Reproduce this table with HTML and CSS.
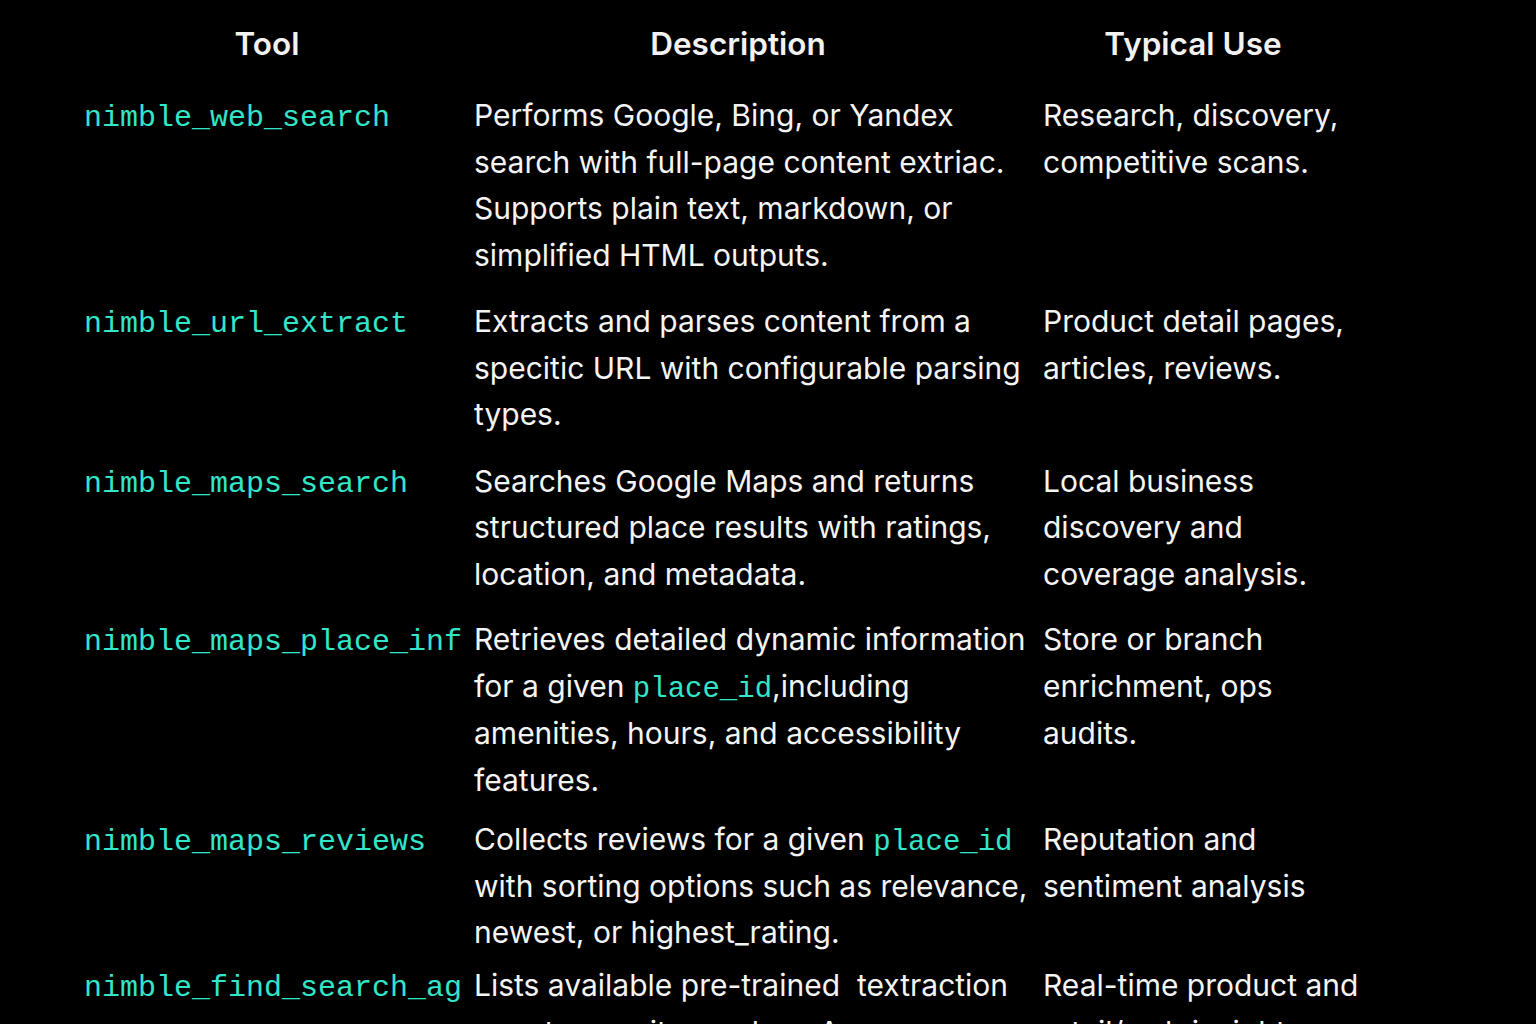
FILE: index.html
```html
<!DOCTYPE html>
<html lang="en">
<head>
<meta charset="utf-8">
<title>Nimble tools</title>
<link rel="stylesheet" href="styles.css">
</head>
<body>
<main class="page">
  <div class="tbl-head">
    <div class="th th--tool">Tool</div>
    <div class="th th--desc">Description</div>
    <div class="th th--use">Typical Use</div>
  </div>

  <div class="row">
    <div class="cell cell--tool"><code class="code">nimble_web_search</code></div>
    <div class="cell cell--desc">Performs Google, Bing, or Yandex<br>search with full-page content extriac.<br>Supports plain text, markdown, or<br>simplified HTML outputs.</div>
    <div class="cell cell--use">Research, discovery,<br>competitive scans.</div>
  </div>

  <div class="row">
    <div class="cell cell--tool"><code class="code">nimble_url_extract</code></div>
    <div class="cell cell--desc">Extracts and parses content from a<br>specitic URL with configurable parsing<br>types.</div>
    <div class="cell cell--use">Product detail pages,<br>articles, reviews.</div>
  </div>

  <div class="row row--r3">
    <div class="cell cell--tool"><code class="code">nimble_maps_search</code></div>
    <div class="cell cell--desc">Searches Google Maps and returns<br>structured place results with ratings,<br>location, and metadata.</div>
    <div class="cell cell--use">Local business<br>discovery and<br>coverage analysis.</div>
  </div>

  <div class="row row--r4">
    <div class="cell cell--tool"><code class="code">nimble_maps_place_info</code></div>
    <div class="cell cell--desc">Retrieves detailed dynamic information<br>for a given <code class="code code--inline">place_id</code>,including<br>amenities, hours, and accessibility<br>features.</div>
    <div class="cell cell--use">Store or branch<br>enrichment, ops<br>audits.</div>
  </div>

  <div class="row row--r5">
    <div class="cell cell--tool"><code class="code">nimble_maps_reviews</code></div>
    <div class="cell cell--desc">Collects reviews for a given <code class="code code--inline">place_id</code><br>with sorting options such as relevance,<br>newest, or highest_rating.</div>
    <div class="cell cell--use">Reputation and<br>sentiment analysis</div>
  </div>

  <div class="row">
    <div class="cell cell--tool"><code class="code">nimble_find_search_agents</code></div>
    <div class="cell cell--desc">Lists available pre-trained &nbsp;textraction<br>agents per site, such as Amazon.</div>
    <div class="cell cell--use">Real-time product and<br>retail/web insights.</div>
  </div>
</main>
</body>
</html>
```

FILE: styles.css
```css
html, body {
  margin: 0;
  padding: 0;
  background: #000;
}

body {
  width: 1536px;
  height: 1024px;
  overflow: hidden;
  color: #f4f4f4;
  font-family: Inter, Roboto, "Liberation Sans", sans-serif;
  font-size: 30px;
  line-height: 46.5px;
}

.page {
  padding: 21px 0 0 84px;
}

.tbl-head,
.row {
  display: grid;
  grid-template-columns: 378px 565px 360px;
}

.tbl-head {
  margin-bottom: 24.5px;
}

.th {
  font-weight: 600;
  font-size: 31.5px;
  text-align: center;
  color: #f2f2f2;
}

.th--tool { padding-right: 12px; }
.th--desc { padding-right: 13px; }
.th--use { padding-left: 16px; padding-right: 44px; }

.row {
  padding-bottom: 20px;
}

.row--r3 { padding-bottom: 18.5px; }
.row--r4 { padding-bottom: 12.5px; line-height: 47px; }
.row--r5 { padding-bottom: 6.5px; }

.cell {
  white-space: nowrap;
  overflow: hidden;
}

.cell--desc {
  padding-left: 12px;
}

.cell--use {
  padding-left: 16px;
  overflow: visible;
}

.code {
  font-family: "Liberation Mono", "DejaVu Sans Mono", monospace;
  font-size: 30px;
  line-height: 1;
  color: #33e5c9;
}

.code--inline {
  font-size: 29px;
}
```
